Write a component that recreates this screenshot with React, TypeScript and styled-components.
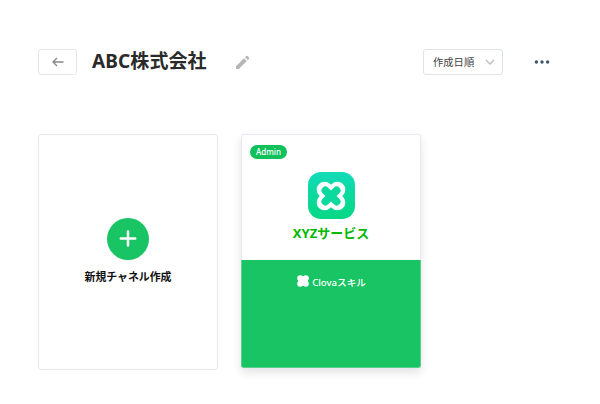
import React from "react";
import styled, { createGlobalStyle } from "styled-components";

const GlobalStyle = createGlobalStyle`
  * { box-sizing: border-box; }
  body {
    margin: 0;
    background: #fff;
    color: #2a2a2a;
    font-family: "Noto Sans", "Noto Sans CJK JP", sans-serif;
  }
`;

const Page = styled.main`
  width: 600px;
  height: 404px;
  overflow: hidden;
  padding: 49px 50px 0 38px;
`;

const Header = styled.header`
  display: flex;
  align-items: center;
  height: 26px;
`;

const BackButton = styled.button`
  display: flex;
  align-items: center;
  justify-content: center;
  width: 39px;
  height: 26px;
  padding: 0;
  border: 1px solid #e4e7ef;
  border-radius: 3px;
  background: #fff;
`;

const Title = styled.h1`
  margin: -3px 0 0 15px;
  width: 116px;
  font-size: 19px;
  font-weight: 700;
  line-height: 26px;
  letter-spacing: 0.1px;
  white-space: nowrap;
`;

const EditButton = styled.button`
  display: flex;
  margin-left: 27px;
  padding: 0;
  border: 0;
  background: none;
`;

const SortSelect = styled.button`
  display: flex;
  align-items: center;
  justify-content: space-between;
  width: 80px;
  height: 26px;
  margin-left: auto;
  padding: 0 7px 0 9px;
  border: 1px solid #dfe3e6;
  border-radius: 3px;
  background: #fff;
  color: #444;
  font: 10.3px/24px "Noto Sans CJK JP", sans-serif;
`;

const MoreButton = styled.button`
  display: flex;
  margin: -1px 0 0 31px;
  padding: 0;
  border: 0;
  background: none;
`;

const Cards = styled.section`
  display: flex;
  align-items: flex-start;
  gap: 23px;
  margin-top: 59px;
`;

const Card = styled.article<{ $raised?: boolean }>`
  display: flex;
  flex-direction: column;
  align-items: center;
  width: 180px;
  height: ${(p) => (p.$raised ? 235 : 236)}px;
  border: 1px solid #e6e9ef;
  border-radius: 3px;
  background: #fff;
  box-shadow: ${(p) => (p.$raised ? "0 4px 10px rgba(0, 0, 0, 0.11)" : "none")};
`;

const AddCircle = styled.div`
  display: flex;
  align-items: center;
  justify-content: center;
  width: 42px;
  height: 42px;
  margin-top: 83px;
  border-radius: 50%;
  background: #18c463;
`;

const AddLabel = styled.div`
  margin-top: 7px;
  color: #111;
  font: 700 10.9px/18px "Noto Sans CJK JP", sans-serif;
`;

const Badge = styled.span`
  align-self: flex-start;
  width: 37px;
  height: 14px;
  margin: 10px 0 0 8px;
  border-radius: 7px;
  background: #10c15b;
  color: #fff;
  font-size: 8px;
  font-weight: 500;
  line-height: 13px;
  text-align: center;
`;

const ServiceIcon = styled.div`
  display: flex;
  align-items: center;
  justify-content: center;
  width: 47px;
  height: 47px;
  margin-top: 13px;
  border-radius: 13px;
  background: linear-gradient(#12dbb8, #06d784);
`;

const ServiceName = styled.h2`
  margin: 4px 0 0;
  color: #00b900;
  font-size: 13px;
  font-weight: 700;
  line-height: 20px;
`;

const Footer = styled.footer`
  display: flex;
  justify-content: center;
  align-items: flex-start;
  gap: 3px;
  align-self: stretch;
  flex: 1;
  margin: 17px -1px 0;
  padding: 15px 0 0 1px;
  border: 1px solid #58d18d;
  border-top: 0;
  border-radius: 0 0 3px 3px;
  background: #18c463;
  color: #fff;
  font-size: 9.6px;
  font-weight: 500;
  line-height: 15px;
`;

export default function App() {
  return (
    <Page>
      <GlobalStyle />
      <Header>
        <BackButton aria-label="Back">
          <svg width="12" height="10" viewBox="0 0 12 10" fill="none" stroke="#888" strokeWidth="1.3">
            <path d="M11.5 5H1M5 1 1 5l4 4" />
          </svg>
        </BackButton>
        <Title>ABC株式会社</Title>
        <EditButton aria-label="Edit">
          <svg width="15" height="15" viewBox="0 0 15 15" fill="#b5b5b5">
            <path d="M1 11.2 9 3.2l2.8 2.8-8 8H1zM10 2.3l1.2-1.2q.7-.7 1.4 0l1.4 1.4q.7.7 0 1.4l-1.2 1.2z" />
          </svg>
        </EditButton>
        <SortSelect>
          作成日順
          <svg width="10" height="7" viewBox="0 0 10 7" fill="none" stroke="#b8bcc0" strokeWidth="1.3">
            <path d="m1 1 4 4 4-4" />
          </svg>
        </SortSelect>
        <MoreButton aria-label="More">
          <svg width="16" height="4" viewBox="0 0 16 4" fill="#3f566a">
            <circle cx="2.4" cy="2" r="1.7" />
            <circle cx="8" cy="2" r="1.7" />
            <circle cx="13.6" cy="2" r="1.7" />
          </svg>
        </MoreButton>
      </Header>
      <Cards>
        <Card>
          <AddCircle>
            <svg width="18" height="18" viewBox="0 0 18 18" stroke="#fff" strokeWidth="2.5" strokeLinecap="round">
              <path d="M9 1.4v14M1.8 8.4h14.4" />
            </svg>
          </AddCircle>
          <AddLabel>新規チャネル作成</AddLabel>
        </Card>
        <Card $raised>
          <Badge>Admin</Badge>
          <ServiceIcon>
            <svg width="30" height="30" viewBox="-15 -15 30 30" strokeLinecap="round">
              <path d="M-6.4-6.4 6.4 6.4M6.4-6.4-6.4 6.4" stroke="#fff" strokeWidth="15.8" />
              <path d="M-5.6-5.6 5.6 5.6M5.6-5.6-5.6 5.6" stroke="#0bd99d" strokeWidth="7.8" />
            </svg>
          </ServiceIcon>
          <ServiceName>XYZサービス</ServiceName>
          <Footer>
            <svg width="12" height="12" viewBox="-6 -6 12 12" fill="#fff">
              <circle cx="-2.8" cy="-2.8" r="3" />
              <circle cx="2.8" cy="-2.8" r="3" />
              <circle cx="-2.8" cy="2.8" r="3" />
              <circle cx="2.8" cy="2.8" r="3" />
              <rect x="-5" y="-5" width="10" height="10" rx="2" />
            </svg>
            <span>Clovaスキル</span>
          </Footer>
        </Card>
      </Cards>
    </Page>
  );
}
